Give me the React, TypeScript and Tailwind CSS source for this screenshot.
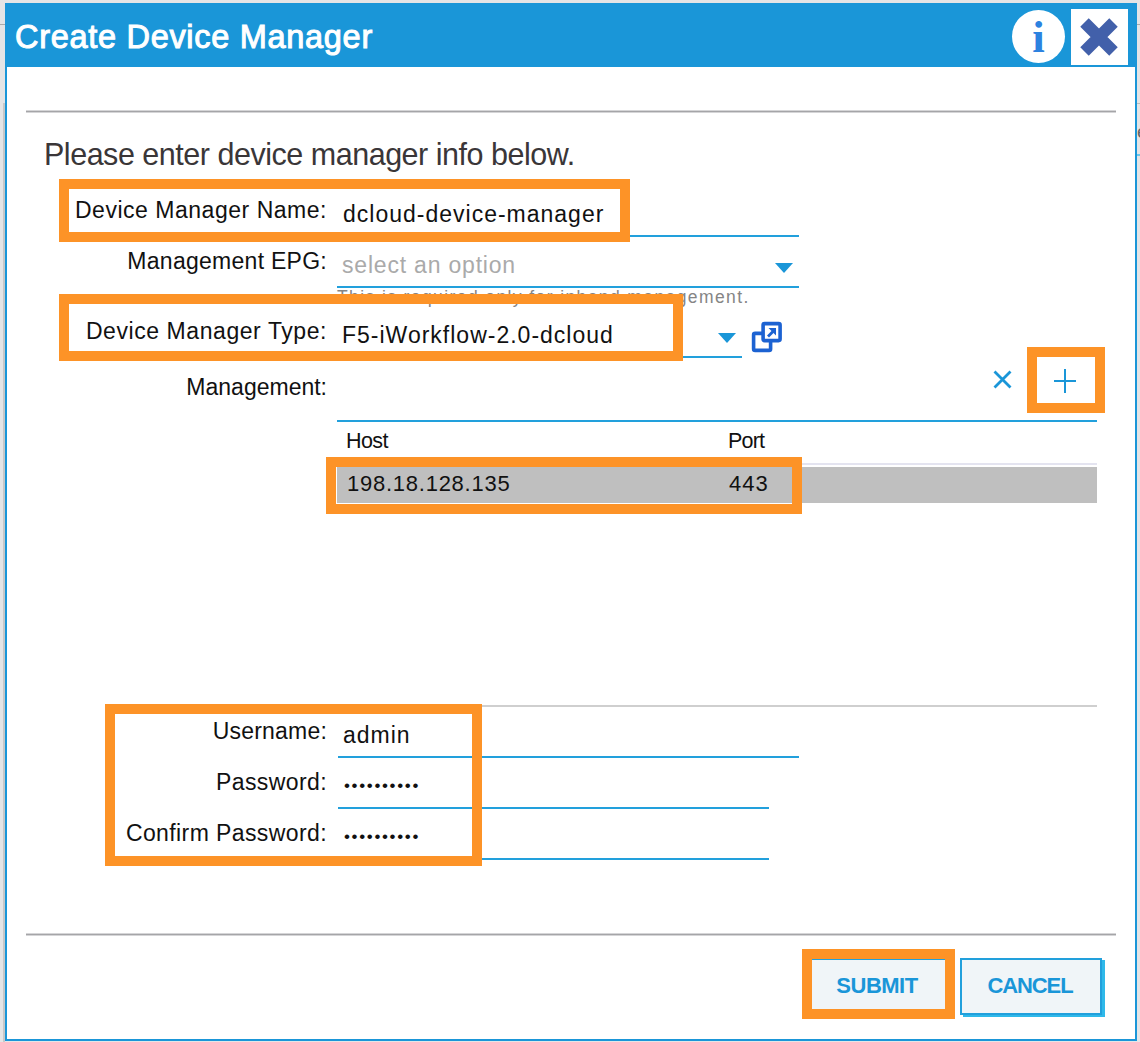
import type { ReactNode } from "react";

function Highlight({ className }: { className: string }) {
  return <div className={`pointer-events-none absolute border-10 border-[#fd9327] ${className}`} />;
}

function Row({ label, labelClass, children }: { label: string; labelClass: string; children: ReactNode }) {
  return (
    <div className="flex h-[51px] items-start">
      <label className={`w-[320px] shrink-0 whitespace-nowrap pt-[11px] text-right ${labelClass}`}>{label}</label>
      {children}
    </div>
  );
}

function Caret({ className }: { className: string }) {
  return (
    <svg className={className} width="18" height="10" viewBox="0 0 18 10">
      <path d="M0 0H18L9 10Z" fill="#1a96d8" />
    </svg>
  );
}

function PopoutIcon() {
  return (
    <svg className="ml-[9px] mt-[14px]" width="32" height="32" viewBox="0 0 32 32" fill="none" stroke="#1c62d2" strokeWidth="3.6">
      <rect x="2.6" y="12.4" width="17" height="17" rx="1.5" />
      <rect x="12.1" y="2.6" width="17" height="17" rx="1.5" fill="#fff" />
      <path d="M17 15.5L22 10.5" strokeWidth="2.8" />
      <path d="M17.5 7H25V14.5Z" fill="#1c62d2" stroke="none" />
    </svg>
  );
}

export default function App() {
  return (
    <div className="relative h-[1042px] w-[1140px] overflow-hidden bg-[#e5e5e6] pl-[5px] pt-[3px] font-['Liberation_Sans',Arial,sans-serif] text-[23px] leading-[26px] text-[#111]">
      <div className="absolute left-0 top-[24px] h-px w-[5px] bg-[#aaa]" />
      <div className="absolute left-[3px] top-[103px] h-[939px] w-[2px] bg-[#c8c8c8]" />
      <div className="absolute right-0 top-[24px] h-px w-[3px] bg-[#aaa]" />
      <div className="absolute right-0 top-[103px] h-px w-[3px] bg-[#bbb]" />
      <div className="absolute left-[1137px] top-[119px] h-[24px] w-[3px] overflow-hidden text-[19px] text-[#666]">e</div>
      <div className="absolute right-0 top-[154px] h-[2px] w-[3px] bg-[#6cc5ea]" />

      <section className="flex h-[1038px] w-[1132px] flex-col border-2 border-t-0 border-[#1a96d8] bg-white">
        <header className="flex h-[64px] shrink-0 items-start bg-[#1a96d8]">
          <h1 className="ml-[8px] mt-[16px] grow whitespace-nowrap text-[32.5px] leading-[37px] tracking-[0.7px] text-white [-webkit-text-stroke:1px_white]">
            Create Device Manager
          </h1>
          <div className="mr-[6px] mt-[7px] flex size-[53px] items-center justify-center rounded-full bg-white">
            <span className="font-['Liberation_Serif',serif] text-[45px] font-bold leading-[50px] text-[#2c82e0]">i</span>
          </div>
          <button className="mr-[7px] mt-[6px] flex h-[56px] w-[57px] items-center justify-center bg-white pr-px">
            <svg width="38" height="38" viewBox="0 0 38 38" stroke="#4260aa" strokeWidth="12">
              <path d="M4.5 4.5L33.5 33.5M33.5 4.5L4.5 33.5" />
            </svg>
          </button>
        </header>

        <div className="ml-[19px] mt-[43px] h-[3px] w-[1090px] shrink-0 border-y border-[#d5d5d7] bg-[#a5a5a8]" />
        <p className="ml-[37px] mt-[23px] h-[50px] whitespace-nowrap text-[30.5px] leading-[36px] tracking-[-0.48px] text-[#3a3638]">
          Please enter device manager info below.
        </p>

        <Row label="Device Manager Name:" labelClass="tracking-[0.52px]">
          <div className="ml-[10px] h-full w-[462px] border-b-2 border-[#22a0dc] pl-[6px] pt-[15px] tracking-[1px]">
            dcloud-device-manager
          </div>
        </Row>
        <Row label="Management EPG:" labelClass="tracking-[0.27px]">
          <div className="ml-[10px] flex h-full w-[462px] items-start justify-between border-b-2 border-[#22a0dc] pl-[5px] pt-[15px] tracking-[0.8px] text-[#aaa]">
            <span>select an option</span>
            <Caret className="mr-[6px] mt-[11px]" />
          </div>
        </Row>
        <p className="ml-[330px] h-[19px] whitespace-nowrap text-[17.5px] leading-[19px] tracking-[1.4px] text-[#858585]">
          This is required only for inband management.
        </p>
        <Row label="Device Manager Type:" labelClass="tracking-[0.57px]">
          <div className="ml-[10px] flex h-full w-[405px] items-start justify-between border-b-2 border-[#22a0dc] pl-[5px] pt-[15px] tracking-[1px]">
            <span>F5-iWorkflow-2.0-dcloud</span>
            <Caret className="mr-[6px] mt-[11px]" />
          </div>
          <PopoutIcon />
        </Row>

        <div className="flex h-[64px] items-start">
          <label className="w-[320px] pt-[16px] text-right">Management:</label>
          <div className="ml-[10px] flex h-full w-[760px] items-start justify-end border-b-2 border-[#22a0dc]">
            <svg className="mr-[42px] mt-[12px]" width="19" height="19" viewBox="0 0 19 19" stroke="#1a96d8" strokeWidth="2.8">
              <path d="M1.5 1.5L17.5 17.5M17.5 1.5L1.5 17.5" />
            </svg>
            <svg className="mr-[21px] mt-[11px]" width="22" height="24" viewBox="0 0 22 24" stroke="#1a96d8" strokeWidth="2">
              <path d="M0 12H22M11 0V24" />
            </svg>
          </div>
        </div>

        <div className="ml-[330px] h-[285px] w-[760px] shrink-0 border-b-2 border-[#cfcfcf]">
          <div className="flex h-[43px] border-b-2 border-[#e4e4f0] pl-[9px] pt-[6px] text-[21.5px] leading-[26px]">
            <div className="w-[382px] tracking-[-0.6px]">Host</div>
            <div className="tracking-[-0.8px]">Port</div>
          </div>
          <div className="mt-[2px] flex h-[36px] bg-[#bfbfbf] pl-[10px] pt-[4px] text-[22px]">
            <div className="w-[382px] tracking-[0.75px]">198.18.128.135</div>
            <div className="tracking-[1px]">443</div>
          </div>
        </div>

        <Row label="Username:" labelClass="tracking-[0.2px]">
          <div className="ml-[11px] h-full w-[461px] border-b-2 border-[#22a0dc] pl-[5px] pt-[15px] tracking-[1px]">admin</div>
        </Row>
        <Row label="Password:" labelClass="tracking-[0.4px]">
          <div className="ml-[11px] h-full w-[431px] border-b-2 border-[#22a0dc] pl-[6px] pt-[15px] text-[17px] tracking-[1.65px]">••••••••••</div>
        </Row>
        <Row label="Confirm Password:" labelClass="tracking-[0.4px]">
          <div className="ml-[11px] h-full w-[431px] border-b-2 border-[#22a0dc] pl-[6px] pt-[15px] text-[17px] tracking-[1.65px]">••••••••••</div>
        </Row>

        <div className="ml-[19px] mt-[73px] h-[3px] w-[1090px] shrink-0 border-y border-[#d5d5d7] bg-[#a5a5a8]" />
        <footer className="mt-[22px] flex justify-end gap-[11px] pr-[33px] text-[22px] font-bold text-[#1a96d8]">
          <button className="h-[57px] w-[142px] border-2 border-[#22a0dc] bg-[#f0f5f8] pb-px pr-[2px] tracking-[-0.5px] shadow-[3px_2px_0_#2fb9ea]">
            SUBMIT
          </button>
          <button className="h-[57px] w-[142px] border-2 border-[#22a0dc] bg-[#f0f5f8] pb-px pr-[2px] tracking-[-1.1px] shadow-[3px_2px_0_#2fb9ea]">
            CANCEL
          </button>
        </footer>
      </section>

      <Highlight className="left-[59px] top-[179px] h-[63px] w-[571px]" />
      <Highlight className="left-[59px] top-[294px] h-[67px] w-[624px]" />
      <Highlight className="left-[1027px] top-[347px] h-[66px] w-[78px]" />
      <Highlight className="left-[326px] top-[457px] h-[57px] w-[476px]" />
      <Highlight className="left-[105px] top-[704px] h-[162px] w-[377px]" />
      <Highlight className="left-[802px] top-[949px] h-[70px] w-[153px]" />
    </div>
  );
}
